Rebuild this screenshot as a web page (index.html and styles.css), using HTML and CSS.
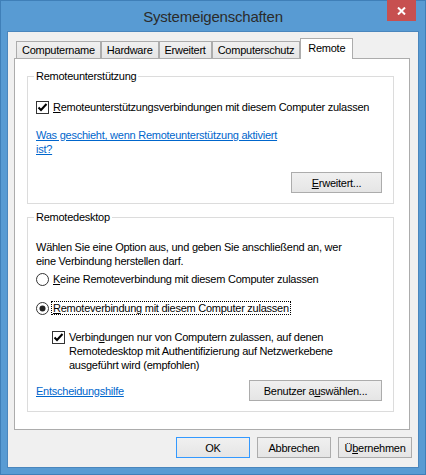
FILE: index.html
```html
<!DOCTYPE html>
<html lang="de">
<head>
    <meta charset="UTF-8">
    <title>Systemeigenschaften</title>
    <link rel="stylesheet" href="styles.css">
</head>
<body>

<div class="window">
    <div class="titlebar">
        <span class="title">Systemeigenschaften</span>
        <span class="close">
            <svg width="9" height="8" viewBox="0 0 9 8"><path d="M1 0.5 L8 7.5 M8 0.5 L1 7.5" stroke="#fff" stroke-width="2"/></svg>
        </span>
    </div>

    <div class="client">
        <div class="tabs">
            <span class="tab">Computername</span>
            <span class="tab">Hardware</span>
            <span class="tab">Erweitert</span>
            <span class="tab">Computerschutz</span>
            <span class="tab active">Remote</span>
        </div>

        <div class="panel">
            <fieldset class="group group-assist">
                <legend>Remoteunterstützung</legend>
                <label class="option first">
                    <svg class="box" width="13" height="13" viewBox="0 0 13 13"><rect x="0.5" y="0.5" width="12" height="12" fill="#fff" stroke="#333"/><path d="M2.5 6.5 L5 9 L10.5 3" fill="none" stroke="#000" stroke-width="2"/></svg>
                    <span class="caption"><u>R</u>emoteunterstützungsverbindungen mit diesem Computer zulassen</span>
                </label>
                <a class="link help" href="#">Was geschieht, wenn Remoteunterstützung aktiviert<br>ist?</a>
                <div class="actions">
                    <button type="button" class="btn wide"><u>E</u>rweitert...</button>
                </div>
            </fieldset>

            <fieldset class="group group-desktop">
                <legend>Remotedesktop</legend>
                <p class="intro">Wählen Sie eine Option aus, und geben Sie anschließend an, wer<br>eine Verbindung herstellen darf.</p>
                <label class="option radio-off">
                    <svg class="box" width="13" height="13" viewBox="0 0 13 13"><circle cx="6.5" cy="6.5" r="6" fill="#fff" stroke="#333"/></svg>
                    <span class="caption"><u>K</u>eine Remoteverbindung mit diesem Computer zulassen</span>
                </label>
                <label class="option radio-on">
                    <svg class="box" width="13" height="13" viewBox="0 0 13 13"><circle cx="6.5" cy="6.5" r="6" fill="#fff" stroke="#333"/><circle cx="6.5" cy="6.5" r="3" fill="#222"/></svg>
                    <span class="caption focused"><u>R</u>emoteverbindung mit diesem Computer zulassen</span>
                </label>
                <label class="option sub">
                    <svg class="box" width="13" height="13" viewBox="0 0 13 13"><rect x="0.5" y="0.5" width="12" height="12" fill="#fff" stroke="#333"/><path d="M2.5 6.5 L5 9 L10.5 3" fill="none" stroke="#000" stroke-width="2"/></svg>
                    <span class="caption">Verbin<u>d</u>ungen nur von Computern zulassen, auf denen<br>Remotedesktop mit Authentifizierung auf Netzwerkebene<br>ausgeführt wird (empfohlen)</span>
                </label>
                <div class="footer">
                    <a class="link" href="#">Entscheidungshilfe</a>
                    <button type="button" class="btn users">Benutzer a<u>u</u>swählen...</button>
                </div>
            </fieldset>
        </div>

        <div class="buttons">
            <button type="button" class="btn dialog default">OK</button>
            <button type="button" class="btn dialog">Abbrechen</button>
            <button type="button" class="btn dialog">Ü<u>b</u>ernehmen</button>
        </div>
    </div>
</div>

</body>
</html>
```

FILE: styles.css
```css
body {
    margin: 0;
    font-family: "Liberation Sans", Arial, sans-serif;
    font-size: 11px;
    letter-spacing: -0.25px;
    color: #000;
}
.window {
    position: relative;
    width: 426px;
    height: 475px;
    box-sizing: border-box;
    padding: 0 8px 8px 8px;
    background-color: #589bd3;
    box-shadow: inset 0 0 0 1px #3f7fb8;
    display: flex;
    flex-direction: column;
}
.titlebar {
    height: 32px;
    display: flex;
    align-items: center;
    justify-content: center;
}
.title {
    font-size: 15px;
    letter-spacing: -0.2px;
    color: #2b2b2b;
}
.close {
    position: absolute;
    top: 0;
    right: 10px;
    width: 29px;
    height: 21px;
    background-color: #c75050;
    display: flex;
    align-items: center;
    justify-content: center;
}
.client {
    flex: 1;
    background-color: #f0f0f0;
    box-shadow: 0 0 0 1px #4a86bd;
    padding: 6px 6px 9px 6px;
    display: flex;
    flex-direction: column;
}

/* tab strip */
.tabs {
    position: relative;
    z-index: 1;
    height: 21px;
    margin-bottom: -1px;
    padding-left: 2px;
    display: flex;
    align-items: flex-end;
}
.tab {
    height: 16px;
    line-height: 16px;
    padding: 0 5px;
    border: 1px solid #acacac;
    background: linear-gradient(#f0f0f0, #e5e5e5);
}
.tab.active {
    height: 18px;
    line-height: 18px;
    padding: 0 7px 2px 7px;
    border-bottom: none;
    background: #fff;
}
.panel {
    flex: 1;
    margin-right: 2px;
    background-color: #fff;
    border: 1px solid #acacac;
}

/* group boxes */
.group {
    margin: 10px 15px 0 12px;
    padding: 0 11px 10px 8px;
    border: 1px solid #dcdcdc;
    min-width: 0;
}
.group-desktop {
    margin-top: 6px;
}
legend {
    padding: 0 2px;
    margin-left: -2px;
    line-height: 14px;
}
.option {
    display: flex;
    align-items: flex-start;
    line-height: 14px;
}
.option .box {
    flex: none;
    margin-top: 1px;
}
.caption {
    margin-left: 2px;
    padding: 0 1px;
    border: 1px dotted transparent;
    line-height: 12px;
}
.caption.focused {
    border-color: #000;
}
.option.first {
    margin-top: 17px;
}
.link {
    display: block;
    color: #0066cc;
    line-height: 14px;
}
.help {
    margin-top: 14px;
}
.actions {
    margin-top: 16px;
    display: flex;
    justify-content: flex-end;
}
.intro {
    margin: 16px 0 0 0;
    line-height: 14px;
}
.radio-off {
    margin-top: 4px;
}
.radio-on {
    margin-top: 15px;
}
.sub {
    margin-top: 15px;
    padding-left: 16px;
}
.sub .caption {
    line-height: 14px;
    border-width: 0 1px;
}
.footer {
    margin-top: 8px;
    display: flex;
    align-items: center;
    justify-content: space-between;
}

/* push buttons */
.btn {
    height: 21px;
    padding: 0;
    font-family: inherit;
    font-size: 11px;
    letter-spacing: -0.25px;
    color: #000;
    border: 1px solid #acacac;
    background: linear-gradient(#f0f0f0, #e5e5e5);
}
.btn.wide {
    width: 91px;
}
.btn.users {
    width: 133px;
}
.buttons {
    margin-top: 7px;
    display: flex;
    justify-content: flex-end;
    gap: 7px;
}
.btn.dialog {
    width: 74px;
}
.btn.default {
    border-color: #3399ff;
}
```
